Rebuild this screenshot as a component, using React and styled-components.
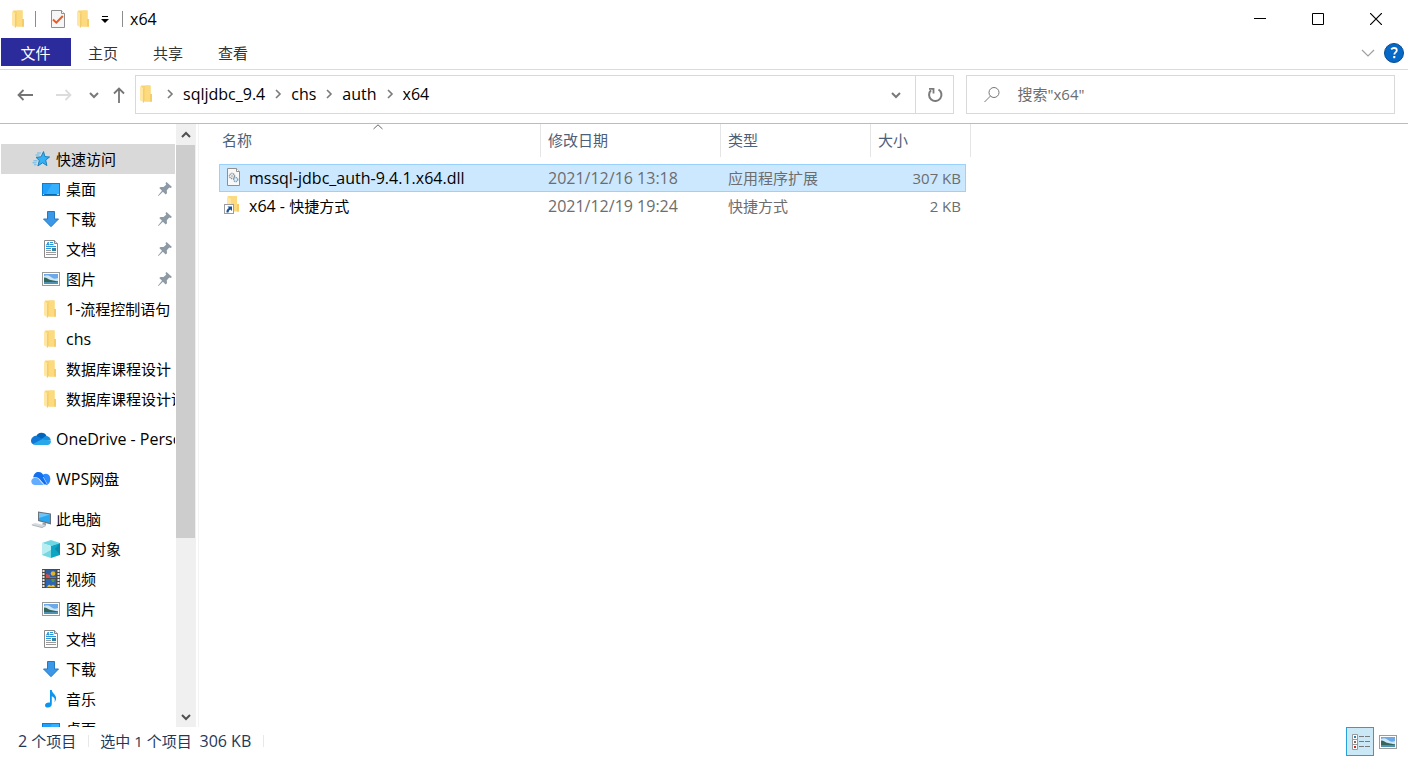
import React, { useState } from 'react'
import styled, { createGlobalStyle } from 'styled-components'

const GlobalStyle = createGlobalStyle`
* {
    box-sizing: border-box;
}
body {
    margin: 0;
    background: #fff;
    color: #000;
    font-family: "Open Sans", "Noto Sans CJK SC", sans-serif;
    font-size: 15px;
    line-height: 20px;
}
button, input {
    font: inherit;
    color: inherit;
    border: 0;
    padding: 0;
    background: none;
}
a {
    color: inherit;
    text-decoration: none;
}
svg {
    display: block;
    flex: none;
}
`

const Window = styled.div`
height: 100vh;
display: flex;
flex-direction: column;
overflow: hidden;
`

const TitleBar = styled.header`
height: 38px;
flex: none;
display: flex;
align-items: center;
justify-content: space-between;
padding: 0 3px 0 9px;
`

const QuickTools = styled.div`
display: flex;
align-items: center;
`

const Divider = styled.span`
width: 1px;
height: ${props => props.$tall ? '16px' : '12px'};
margin: ${props => props.$gap || '0'};
background: ${props => props.$color || '#8c8c8c'};
`

const ToolButton = styled.button`
width: ${props => props.$width || 20}px;
height: 20px;
margin-right: ${props => props.$after || 0}px;
display: flex;
align-items: center;
justify-content: center;
`

const Title = styled.h1`
margin: 0;
font-size: 16px;
font-weight: 400;
`

const WindowButtons = styled.div`
display: flex;
button {
    width: 58px;
    height: 38px;
    display: flex;
    align-items: center;
    justify-content: center;
}
`

const TabBar = styled.nav`
height: 32px;
flex: none;
display: flex;
justify-content: space-between;
padding: 0 4px 0 1px;
border-bottom: 1px solid #dadbdc;
`

const Tabs = styled.div`
display: flex;
`

const Tab = styled.button`
width: ${props => props.$file ? '70px' : '65px'};
height: 28px;
padding: 2px 1px 0 0;
background: ${props => props.$file ? '#2b2b9b' : 'transparent'};
color: ${props => props.$file ? '#fff' : '#333'};
`

const TabTools = styled.div`
height: 30px;
display: flex;
align-items: center;
gap: 9px;
`

const NavBar = styled.div`
height: 54px;
flex: none;
display: flex;
align-items: center;
padding: 0 13px 4px 17px;
border-bottom: 1px solid #bcbcbc;
`

const NavButtons = styled.div`
flex: none;
display: flex;
align-items: center;
`

const NavButton = styled.button`
height: 30px;
margin-right: ${props => props.$after}px;
`

const AddressBar = styled.div`
flex: 23 1 0;
min-width: 0;
height: 39px;
display: flex;
border: 1px solid #d9d9d9;
`

const Crumbs = styled.ol`
flex: 1;
min-width: 0;
display: flex;
align-items: center;
margin: 0;
padding: 0 0 2px 1px;
list-style: none;
font-size: 16px;
overflow: hidden;
li {
    display: flex;
    align-items: center;
}
`

const CrumbArrow = styled.svg`
margin: 1px 9px 0;
`

const AddressButton = styled.button`
width: 38px;
display: flex;
align-items: center;
justify-content: center;
border-left: ${props => props.$line ? '1px solid #d9d9d9' : '0'};
`

const SearchBox = styled.label`
flex: 12 1 0;
min-width: 0;
height: 39px;
margin-left: 12px;
display: flex;
align-items: center;
border: 1px solid #d9d9d9;
svg {
    margin: 0 16px;
}
input {
    flex: 1;
    min-width: 0;
    padding-bottom: 2px;
    outline: none;
}
input::placeholder {
    color: #6d6d6d;
    opacity: 1;
}
`

const Body = styled.div`
flex: 1;
min-height: 0;
display: flex;
`

const Sidebar = styled.nav`
width: 199px;
flex: none;
display: flex;
border-right: 1px solid #f3f3f3;
`

const Tree = styled.ul`
width: 175px;
margin: 0 1px 0 0;
padding: 20px 0 0 1px;
list-style: none;
overflow: hidden;
ul {
    margin: 0 0 10px;
    padding: 0;
    list-style: none;
}
`

const TreeLink = styled.a`
height: 30px;
display: flex;
align-items: center;
gap: 5px;
padding: 0 3px 0 ${props => props.$child ? '40px' : '30px'};
background: ${props => props.$active ? '#d9d9d9' : 'transparent'};
white-space: nowrap;
`

const TreeLabel = styled.span`
flex: 1 0 auto;
`

const ScrollBar = styled.div`
width: 20px;
display: flex;
flex-direction: column;
background: #f0f0f0;
button {
    width: 19px;
    height: 21px;
    flex: none;
    display: flex;
    align-items: center;
    justify-content: center;
}
`

const Track = styled.div`
flex: 1;
`

const Thumb = styled.div`
width: 19px;
height: 70%;
background: #cdcdcd;
`

const Content = styled.main`
flex: 1;
min-width: 0;
padding-left: 20px;
overflow: hidden;
`

const FileTable = styled.table`
width: 752px;
table-layout: fixed;
border-collapse: separate;
border-spacing: 0;
th, td {
    padding: 0;
    font-weight: 400;
    text-align: left;
    white-space: nowrap;
}
`

const HeadCell = styled.div`
position: relative;
height: 33px;
margin-bottom: 7px;
padding: 6px 0 0 ${props => props.$first ? '3px' : '7px'};
border-right: 1px solid #e5e5e5;
color: #4c607a;
`

const SortMark = styled.svg`
position: absolute;
top: 0;
left: calc(50% - 7px);
`

const FileRow = styled.tr`
height: ${props => props.$selected ? '28px' : '27px'};
color: #6d6d6d;
td {
    padding-left: 7px;
    background: ${props => props.$selected ? '#cce8ff' : 'transparent'};
    border: 0 solid ${props => props.$selected ? '#99d1ff' : 'transparent'};
    border-width: 1px 0;
}
td:first-child {
    padding-left: 3px;
    border-left-width: 1px;
    color: #000;
}
td:last-child {
    padding-right: 4px;
    border-right-width: 1px;
    text-align: right;
}
`

const FileName = styled.span`
display: flex;
align-items: center;
gap: 6px;
`

const Latin = styled.span`
font-size: 16px;
`

const StatusBar = styled.footer`
height: 30px;
flex: none;
display: flex;
align-items: center;
justify-content: space-between;
padding: 0 6px 1px 18px;
color: #1e395b;
`

const StatusInfo = styled.div`
display: flex;
align-items: center;
padding-bottom: 1px;
`

const ViewButtons = styled.div`
display: flex;
`

const ViewButton = styled.button`
width: 28px;
height: 29px;
display: flex;
align-items: center;
justify-content: center;
border: 1px solid ${props => props.$on ? '#26a0da' : 'transparent'};
background: ${props => props.$on ? '#cbe8f6' : 'transparent'};
`

const Icon = ({ children }) => (
    <svg width="20" height="20" viewBox="0 0 20 20" aria-hidden="true">{children}</svg>
)

const FolderIcon = () => (
    <Icon>
        <path d="M4 1.500h9.500v8.500H15v7.500H6z" fill="#f9d36f" />
        <path d="M8 1.500h5.500v8.500H15v7.500H8z" fill="#fbda80" />
        <path d="M13 10h2v7.500h-2z" fill="#f5cc66" />
        <path d="M3 2l4 2.700v14l-4-2.500z" fill="#ffe7a3" />
        <path d="M6.300 4.300l.7.400v14l-.7-.4z" fill="#eec05a" />
    </Icon>
)

const StarIcon = () => (
    <Icon>
        <path d="M12.500 2.600l1.400 5 4.700.4-3.900 3 1.200 5.600-4.300-2.800-4.700 3.100 1.400-5.400-3.300-3.200 5-.4z" fill="#35b0f5" stroke="#1681c4" strokeWidth="1" />
        <path d="M6 4h4M4.500 6h4M2.500 11.800h4M1.500 13.800h4M3 15.800h2.500" stroke="#62b8ea" strokeWidth="1" />
    </Icon>
)

const DesktopIcon = () => (
    <Icon>
        <rect x="1" y="4" width="18" height="13" fill="#0a7fd4" />
        <rect x="2" y="5" width="16" height="10" fill="#1ea0fb" />
        <path d="M11 5h7v10H5z" fill="#35b0ff" />
        <path d="M2 15.500h1M5 15.500h9M16 15.500h2" stroke="#b7e2ff" strokeWidth="1" />
        <path d="M4 15.500h11" stroke="#0868ad" strokeWidth="1" />
    </Icon>
)

const DownIcon = () => (
    <Icon>
        <path d="M6.500 2.500h7v7.500h4L10 17.700 2.500 10h4z" fill="#3b98e8" stroke="#2878c0" strokeWidth="1" />
    </Icon>
)

const DocIcon = () => (
    <Icon>
        <path d="M3.500 1.500h10l3 3v14h-13z" fill="#fff" stroke="#8a8a8a" />
        <path d="M13.500 1.500v3h3" fill="#ddd" stroke="#8a8a8a" />
        <path d="M9 3.500h3M8.500 5.500h4M5 7.500h10M5 9.500h5" stroke="#2b95dc" />
        <path d="M5.300 6.500L7.300 3v3.500M6 5.500h2" stroke="#2b95dc" fill="none" />
        <path d="M5 11.500h5M5 13.500h10M5 15.500h10" stroke="#9a9a9a" />
        <rect x="11" y="9" width="4" height="3" fill="#3383a5" />
    </Icon>
)

const PictureIcon = () => (
    <Icon>
        <rect x="1.500" y="3.500" width="17" height="13" fill="#fff" stroke="#9b9b9b" />
        <rect x="3" y="5" width="14" height="10" fill="#6ba9e8" />
        <path d="M3 7q4-2 7 1t7 1v3H3z" fill="#cde6f7" />
        <path d="M3 8.500c3 0 4 2 7 2.500s5 1 7 1.500v1H3z" fill="#35665b" />
        <path d="M3 13h14v2H3z" fill="#4e91b3" />
    </Icon>
)

const OneDriveIcon = () => (
    <Icon>
        <path d="M5.200 7.200A5.700 5.700 0 0 1 15.600 7L12 11 4 9z" fill="#0364b8" />
        <path d="M0 11.700a4.700 4.700 0 0 1 7.500-3.900L14 11.500 3 15.600A4.200 4.200 0 0 1 0 11.700z" fill="#0f78d4" />
        <path d="M10.500 10l4-2.900a4.700 4.700 0 0 1 5.300 4.500L13 12z" fill="#1490df" />
        <path d="M2 15l9-4.800 8.700 1.500c.8 2.300-.9 4.300-3.200 4.300H4.600A4.500 4.500 0 0 1 2 15z" fill="#28a8ea" />
    </Icon>
)

const WpsIcon = () => (
    <Icon>
        <path d="M11 8a4 4 0 0 1 4-3.300c2.700.2 4.500 2.600 4.300 5.800-.2 3-1.700 5-4 5.200z" fill="#2c8cff" />
        <path d="M2.300 8.500C2.500 5 4.900 3 7.500 3c3 0 4.600 2 5.400 4.300L17 15.500h-4L8 9.700C6.500 8.300 4.500 8 2.300 8.500z" fill="#126ff0" />
        <path d="M.3 12c0-3 4.700-4.700 7.300-2l5.200 6H4C1.800 16 .3 14.400.3 12z" fill="#62adff" />
        <path d="M7.800 9.500l5.300 6.200M12.300 8l4 7.300" stroke="#d9ecff" strokeWidth=".7" />
    </Icon>
)

const ComputerIcon = () => (
    <Icon>
        <path d="M7 2.500l13 2v11L7 12z" fill="#68737d" />
        <path d="M8 3.700l11 1.700v8.500L8 11z" fill="#2ba7f0" />
        <path d="M8 3.700l11 1.700L8 9z" fill="#69c6fa" />
        <path d="M12 13.500l3 .8v2l-4-.9z" fill="#9aa2a9" />
        <path d="M0 15.500l4-1.500 11 2.500-4 2.500z" fill="#d5dade" />
        <path d="M1 16l10 2.500 4-2" stroke="#9aa2a9" strokeWidth=".7" fill="none" />
    </Icon>
)

const CubeIcon = () => (
    <Icon>
        <path d="M10 1l9 3-9 3-9-3z" fill="#6fd6e3" />
        <path d="M1 4l9 3v12l-9-3z" fill="#b8edf1" />
        <path d="M19 4l-9 3v12l9-3z" fill="#0ca6c4" />
        <path d="M1 16l9-5v8z" fill="#57ced8" opacity=".7" />
        <path d="M19 4v12l-5-6z" fill="#0a8cae" />
    </Icon>
)

const VideoIcon = () => (
    <Icon>
        <rect x="1" y="0" width="18" height="19" fill="#4a4a4a" />
        <path d="M2.500 1v18M17.500 1v18" stroke="#e8e8e8" strokeWidth="2" strokeDasharray="2 1" />
        <rect x="5" y="1" width="10" height="8" fill="#315f9e" />
        <rect x="5" y="10" width="10" height="9" fill="#2c65b0" />
        <path d="M5 5l4 1v3H5z" fill="#d14f4b" />
        <circle cx="12" cy="4.500" r="2.300" fill="#ddb530" />
        <path d="M9 8h6v1H9zM10 10h4l-1 3h-2z" fill="#4f9a3f" />
        <path d="M6 18q2-4 4-1 3-3 4 1z" fill="#eabe32" />
    </Icon>
)

const MusicIcon = () => (
    <Icon>
        <path d="M9 1h1.800c.2 3.500 4.500 4.500 4.300 8.500-.1 1.600-.8 2.700-1.600 3.700.8-2.800.2-5-2.700-6V15c0 2-1.500 3.500-3.800 3.500C5 18.500 4 17.600 4 16.200c0-2 2.500-3.200 5-2.700z" fill="#0c95ee" />
    </Icon>
)

const DllIcon = () => (
    <Icon>
        <path d="M4.500.5h9l3 3v14h-12z" fill="#f8f8f8" stroke="#8f8f8f" />
        <path d="M13.500.5v3h3" fill="#fff" stroke="#8f8f8f" />
        <circle cx="9" cy="8" r="2.500" fill="none" stroke="#8b9197" strokeWidth="1.500" strokeDasharray="1.200 .6" />
        <circle cx="9" cy="8" r=".8" fill="#8b9197" />
        <circle cx="12.700" cy="11.500" r="2" fill="#e6f2fb" stroke="#7ba3c4" strokeWidth="1.500" strokeDasharray="1.200 .5" />
    </Icon>
)

const ShortcutIcon = () => (
    <Icon>
        <path d="M5 0h9v8h2v7.500H5z" fill="#fbda80" />
        <path d="M4 .3L8 3v13H4z" fill="#ffe7a3" />
        <path d="M14 8h2v7.500h-2z" fill="#f5cc66" />
        <rect x="1.500" y="8.500" width="9" height="9" fill="#fff" stroke="#9c9c9c" />
        <path d="M4.500 10.500H9V15l-1.500-1.500Q5.500 14 5.500 16.500h-2Q3 13.500 6 12z" fill="#1a5297" />
    </Icon>
)

const CheckDocIcon = () => (
    <Icon>
        <path d="M3.500 1.500h10l3 3v14h-13z" fill="#f6f6f6" stroke="#8f8f8f" />
        <path d="M13.500 1.500v3h3" fill="#fff" stroke="#8f8f8f" />
        <path d="M5 10.500l3.300 3.200L14.800 7" fill="none" stroke="#ea5b24" strokeWidth="2" />
    </Icon>
)

const DetailsIcon = () => (
    <Icon>
        <path d="M2.500 2.500h5v15h-5zM2.500 7.500h5M2.500 12.500h5" fill="#fff" stroke="#999" />
        <rect x="4" y="4" width="2" height="2" fill="#2c7eb4" />
        <rect x="4" y="9" width="2" height="2" fill="#7c705c" />
        <rect x="4" y="14" width="2" height="2" fill="#c62b1d" />
        <path d="M9 4.500h5M15 4.500h5M9 9.500h5M15 9.500h5M9 14.500h5M15 14.500h5" stroke="#7a7a7a" />
    </Icon>
)

const PinIcon = () => (
    <svg width="14" height="14" viewBox="0 0 14 14" aria-hidden="true">
        <path d="M8.500 0L14 5l-1.500 1-1.200-.4-2.500 2.700.2 3L7.700 12.500 4.900 9.700.5 14l-.5-.5 4-4.700L1.300 6l1.200-1 3 .1L8.200 2.700 7.500 1z" fill="#8d9aa5" />
    </svg>
)

const Chevron = ({ color = '#666', up }) => (
    <svg width="10" height="8" viewBox="0 0 10 8" aria-hidden="true">
        <path d={up ? 'M1 6l4-4 4 4' : 'M1 2l4 4 4-4'} fill="none" stroke={color} strokeWidth="2" />
    </svg>
)

const groups = [
    {
        label: '快速访问', icon: StarIcon, active: true, items: [
            { label: '桌面', icon: DesktopIcon, pinned: true },
            { label: '下载', icon: DownIcon, pinned: true },
            { label: '文档', icon: DocIcon, pinned: true },
            { label: '图片', icon: PictureIcon, pinned: true },
            { label: '1-流程控制语句', icon: FolderIcon },
            { label: 'chs', icon: FolderIcon },
            { label: '数据库课程设计', icon: FolderIcon },
            { label: '数据库课程设计课', icon: FolderIcon },
        ]
    },
    { label: 'OneDrive - Personal', icon: OneDriveIcon, items: [] },
    { label: 'WPS网盘', icon: WpsIcon, items: [] },
    {
        label: '此电脑', icon: ComputerIcon, items: [
            { label: '3D 对象', icon: CubeIcon },
            { label: '视频', icon: VideoIcon },
            { label: '图片', icon: PictureIcon },
            { label: '文档', icon: DocIcon },
            { label: '下载', icon: DownIcon },
            { label: '音乐', icon: MusicIcon },
            { label: '桌面', icon: DesktopIcon },
        ]
    },
]

const files = [
    { name: 'mssql-jdbc_auth-9.4.1.x64.dll', date: '2021/12/16 13:18', type: '应用程序扩展', size: '307 KB', icon: DllIcon },
    { name: 'x64 - 快捷方式', date: '2021/12/19 19:24', type: '快捷方式', size: '2 KB', icon: ShortcutIcon },
]

const crumbs = ['sqljdbc_9.4', 'chs', 'auth', 'x64']

// latin runs are set one size larger than the chinese around them
function Label({ text }) {
    return (
        <span>
            {text.split(/([ -~]+)/).filter(Boolean).map((part, index) => (
                /^[ -~]/.test(part) ? <Latin key={index}>{part}</Latin> : part
            ))}
        </span>
    )
}

function TreeItem({ item, child }) {
    const ItemIcon = item.icon

    return (
        <TreeLink href="#" $child={child} $active={item.active}>
            <ItemIcon />
            <TreeLabel><Label text={item.label} /></TreeLabel>
            {item.pinned && <PinIcon />}
        </TreeLink>
    )
}

function Header() {
    return (
        <>
            <TitleBar>
                <QuickTools>
                    <FolderIcon />
                    <Divider $tall $gap="0 12px 0 6px" />
                    <ToolButton aria-label="属性" $after={6}><CheckDocIcon /></ToolButton>
                    <ToolButton aria-label="新建文件夹" $after={5}><FolderIcon /></ToolButton>
                    <ToolButton aria-label="自定义快速访问工具栏" $width={12} $after={11}>
                        <svg width="8" height="8" viewBox="0 0 8 8">
                            <path d="M1 1.500h6" stroke="#000" />
                            <path d="M0 4h8L4 8z" />
                        </svg>
                    </ToolButton>
                    <Divider $tall $gap="0 7px 0 0" />
                    <Title>x64</Title>
                </QuickTools>
                <WindowButtons>
                    <button aria-label="最小化">
                        <svg width="12" height="12" viewBox="0 0 12 12"><path d="M0 5.500h12" stroke="#000" /></svg>
                    </button>
                    <button aria-label="最大化">
                        <svg width="12" height="12" viewBox="0 0 12 12"><path d="M.5.500h11v11H.5z" fill="none" stroke="#000" /></svg>
                    </button>
                    <button aria-label="关闭">
                        <svg width="12" height="12" viewBox="0 0 12 12"><path d="M0 0l12 12M12 0L0 12" stroke="#000" strokeWidth="1.200" /></svg>
                    </button>
                </WindowButtons>
            </TitleBar>
            <TabBar>
                <Tabs>
                    <Tab $file>文件</Tab>
                    <Tab>主页</Tab>
                    <Tab>共享</Tab>
                    <Tab>查看</Tab>
                </Tabs>
                <TabTools>
                    <button aria-label="展开功能区">
                        <svg width="14" height="8" viewBox="0 0 14 8"><path d="M1 1l6 6 6-6" fill="none" stroke="#a0a0a0" strokeWidth="1.200" /></svg>
                    </button>
                    <button aria-label="帮助">
                        <svg width="20" height="20" viewBox="0 0 20 20">
                            <circle cx="10" cy="10" r="9.500" fill="#0669c8" stroke="#0a4c8f" />
                            <path d="M7.200 6.300Q8.300 5 10 5q2.800 0 2.800 2.300c0 2-2.500 2.200-2.500 4.200" fill="none" stroke="#fff" strokeWidth="1.800" />
                            <rect x="9.200" y="13" width="2.100" height="2.200" fill="#fff" />
                        </svg>
                    </button>
                </TabTools>
            </TabBar>
        </>
    )
}

function Navigation() {
    const [query, setQuery] = useState('')

    return (
        <NavBar>
            <NavButtons>
                <NavButton $after={23} aria-label="后退">
                    <svg width="16" height="12" viewBox="0 0 16 12"><path d="M6.500 1l-5 5 5 5M1.500 6H16" fill="none" stroke="#757575" strokeWidth="1.800" /></svg>
                </NavButton>
                <NavButton $after={17} aria-label="前进">
                    <svg width="16" height="12" viewBox="0 0 16 12"><path d="M9.500 1l5 5-5 5M14.500 6H0" fill="none" stroke="#dcdcdc" strokeWidth="1.800" /></svg>
                </NavButton>
                <NavButton $after={14} aria-label="最近浏览的位置"><Chevron color="#7a7a7a" /></NavButton>
                <NavButton $after={10} aria-label="上移">
                    <svg width="12" height="16" viewBox="0 0 12 16"><path d="M1 6.500l5-5 5 5M6 1.500V16" fill="none" stroke="#757575" strokeWidth="1.800" /></svg>
                </NavButton>
            </NavButtons>
            <AddressBar>
                <Crumbs>
                    <FolderIcon />
                    {crumbs.map((crumb) => (
                        <li key={crumb}>
                            <CrumbArrow width="8" height="10" viewBox="0 0 8 10">
                                <path d="M2 1l4 4-4 4" fill="none" stroke="#7a7a7a" strokeWidth="1.600" />
                            </CrumbArrow>
                            <a href="#">{crumb}</a>
                        </li>
                    ))}
                </Crumbs>
                <AddressButton aria-label="历史记录"><Chevron color="#7a7a7a" /></AddressButton>
                <AddressButton $line aria-label="刷新">
                    <svg width="16" height="16" viewBox="0 0 16 16">
                        <path d="M11.500 2.500A6.200 6.200 0 1 1 4 3.300" fill="none" stroke="#7a7a7a" strokeWidth="2" />
                        <path d="M2 1.800h4.500v4.700" fill="none" stroke="#7a7a7a" strokeWidth="1.800" />
                    </svg>
                </AddressButton>
            </AddressBar>
            <SearchBox>
                <svg width="18" height="18" viewBox="0 0 18 18" aria-hidden="true">
                    <circle cx="11" cy="6.500" r="5" fill="none" stroke="#777" />
                    <path d="M7.500 10L1.500 16" stroke="#777" />
                </svg>
                <input aria-label="搜索" placeholder={'搜索"x64"'} value={query} onChange={(e) => setQuery(e.target.value)} />
            </SearchBox>
        </NavBar>
    )
}

function FileList({ selected, onSelect }) {
    return (
        <FileTable>
            <colgroup>
                <col width="322" />
                <col width="180" />
                <col width="150" />
                <col width="95" />
                <col width="5" />
            </colgroup>
            <thead>
                <tr>
                    <th>
                        <HeadCell $first>
                            名称
                            <SortMark width="10" height="6" viewBox="0 0 10 6"><path d="M.5 5L5 .8 9.500 5" fill="none" stroke="#666" /></SortMark>
                        </HeadCell>
                    </th>
                    <th><HeadCell>修改日期</HeadCell></th>
                    <th><HeadCell>类型</HeadCell></th>
                    <th colSpan="2"><HeadCell>大小</HeadCell></th>
                </tr>
            </thead>
            <tbody>
                {files.map((file, index) => {
                    const RowIcon = file.icon
                    return (
                        <FileRow key={file.name} $selected={selected === index} onClick={() => onSelect(index)}>
                            <td><FileName><RowIcon /><Label text={file.name} /></FileName></td>
                            <td><Latin>{file.date}</Latin></td>
                            <td>{file.type}</td>
                            <td>{file.size}</td>
                        </FileRow>
                    )
                })}
            </tbody>
        </FileTable>
    )
}

function App() {
    const [selected, setSelected] = useState(0)

    return (
        <Window>
            <GlobalStyle />
            <Header />
            <Navigation />
            <Body>
                <Sidebar>
                    <Tree>
                        {groups.map((group) => (
                            <li key={group.label}>
                                <TreeItem item={group} />
                                <ul>
                                    {group.items.map((item) => (
                                        <li key={item.label}><TreeItem item={item} child /></li>
                                    ))}
                                </ul>
                            </li>
                        ))}
                    </Tree>
                    <ScrollBar>
                        <button aria-label="向上滚动"><Chevron up color="#505050" /></button>
                        <Track><Thumb /></Track>
                        <button aria-label="向下滚动"><Chevron color="#505050" /></button>
                    </ScrollBar>
                </Sidebar>
                <Content>
                    <FileList selected={selected} onSelect={setSelected} />
                </Content>
            </Body>
            <StatusBar>
                <StatusInfo>
                    <Label text="2 个项目" />
                    <Divider $color="#e8e8e8" $gap="0 11px 0 12px" />
                    <span>选中 1 个项目&nbsp; <Latin>306 KB</Latin></span>
                    <Divider $color="#e8e8e8" $gap="0 0 0 12px" />
                </StatusInfo>
                <ViewButtons>
                    <ViewButton $on aria-label="详细信息"><DetailsIcon /></ViewButton>
                    <ViewButton aria-label="大缩略图"><PictureIcon /></ViewButton>
                </ViewButtons>
            </StatusBar>
        </Window>
    )
}

export default App
